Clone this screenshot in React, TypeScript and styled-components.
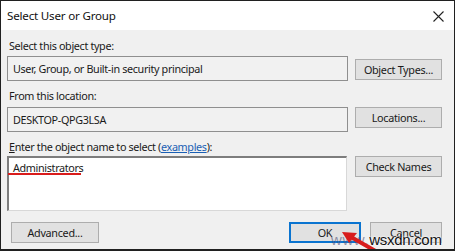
import React from 'react';
import styled, { createGlobalStyle } from 'styled-components';

const GlobalStyle = createGlobalStyle`
  html, body {
    margin: 0;
    padding: 0;
    background: #ffffff;
  }
  * {
    box-sizing: border-box;
  }
`;

const Window = styled.div`
  position: relative;
  width: 455px;
  height: 251px;
  border: 1px solid #202020;
  border-bottom-width: 2px;
  background: #f0f0f0;
  display: flex;
  flex-direction: column;
  overflow: hidden;
  font-family: 'Noto Sans', 'Open Sans', sans-serif;
  font-size: 10.8px;
  color: #1a1a1a;
`;

const TitleBar = styled.div`
  height: 29px;
  background: #ffffff;
  display: flex;
  align-items: center;
  justify-content: space-between;
  padding: 0 10px 0 6px;
  flex-shrink: 0;
`;

const Title = styled.span`
  font-size: 11.6px;
  letter-spacing: -0.2px;
  color: #111;
`;

const Body = styled.div`
  flex: 1;
  display: flex;
  flex-direction: column;
  padding: 9px 12px 0 6px;
`;

const Label = styled.div<{ $top?: number }>`
  margin-top: ${(p) => p.$top ?? 0}px;
  line-height: 14px;
  letter-spacing: -0.35px;
  padding-left: 2px;
`;

const Row = styled.div<{ $top?: number }>`
  display: flex;
  align-items: flex-start;
  justify-content: space-between;
  margin-top: ${(p) => p.$top ?? 0}px;
`;

const ReadBox = styled.div`
  width: 341px;
  height: 25px;
  border: 1px solid #8f8f8f;
  background: #f1f1f1;
  display: flex;
  align-items: center;
  padding-left: 5px;
  letter-spacing: -0.35px;
`;

const NameBox = styled.div`
  position: relative;
  width: 340px;
  height: 55px;
  background: #ffffff;
  border-top: 2px solid #7d7d7d;
  border-left: 2px solid #7d7d7d;
  border-right: 1px solid #d8d8d8;
  border-bottom: 1px solid #d8d8d8;
  padding: 2px 0 0 4px;
  letter-spacing: -0.35px;
`;

const Underline = styled.div`
  position: absolute;
  left: -1px;
  top: 15px;
  width: 73px;
  height: 2px;
  background: #d91c1c;
`;

const Button = styled.button<{ $w?: number; $focus?: boolean }>`
  width: ${(p) => p.$w ?? 87}px;
  height: 21px;
  font-family: inherit;
  font-size: 10.8px;
  letter-spacing: -0.3px;
  color: #1a1a1a;
  background: #e1e1e1;
  border: ${(p) => (p.$focus ? '2px solid #0a74d0' : '1px solid #adadad')};
  padding: 0;
  display: flex;
  align-items: center;
  justify-content: center;
`;

const Footer = styled.div`
  display: flex;
  align-items: center;
  margin-top: 11px;
  padding-left: 4px;
`;

const FooterRight = styled.div`
  margin-left: auto;
  display: flex;
  gap: 9px;
`;

const Link = styled.span`
  color: #1a5fb4;
  text-decoration: underline;
`;

const Access = styled.span`
  text-decoration: underline;
`;

const CloseIcon = styled.svg`
  width: 11px;
  height: 11px;
  margin-top: 2px;
`;

const Watermark = styled.div`
  position: absolute;
  left: 330px;
  top: 230px;
  display: flex;
  align-items: baseline;
  font-family: 'Liberation Sans', Arial, sans-serif;
  font-size: 15px;
  pointer-events: none;
`;

const WmFaint = styled.span`
  color: rgba(80, 80, 120, 0.6);
  letter-spacing: 0.6px;
`;

const WmDark = styled.span`
  color: #111;
  letter-spacing: -0.3px;
  text-shadow: 0 0 2px #fff, 0 0 2px #fff;
`;

const Arrow = styled.svg`
  position: absolute;
  left: 338px;
  top: 228px;
  width: 44px;
  height: 24px;
  pointer-events: none;
`;

export default function App() {
  return (
    <>
      <GlobalStyle />
      <Window>
        <TitleBar>
          <Title>Select User or Group</Title>
          <CloseIcon viewBox="0 0 11 11">
            <path d="M0.5 0.5 L10.5 10.5 M10.5 0.5 L0.5 10.5" stroke="#222" strokeWidth="1.1" />
          </CloseIcon>
        </TitleBar>
        <Body>
          <Label>Select this object type:</Label>
          <Row $top={3}>
            <ReadBox>User, Group, or Built-in security principal</ReadBox>
            <Button style={{ marginTop: 3 }}>Object Types...</Button>
          </Row>
          <Label $top={8}>From this location:</Label>
          <Row $top={4}>
            <ReadBox>DESKTOP-QPG3LSA</ReadBox>
            <Button>Locations...</Button>
          </Row>
          <Label $top={8}>
            <Access>E</Access>nter the object name to select (<Link>examples</Link>):
          </Label>
          <Row $top={2}>
            <NameBox>
              Administrators
              <Underline />
            </NameBox>
            <Button>Check Names</Button>
          </Row>
          <Footer>
            <Button $w={88}>Advanced...</Button>
            <FooterRight>
              <Button $w={72} $focus>OK</Button>
              <Button $w={72}>Cancel</Button>
            </FooterRight>
          </Footer>
        </Body>
        <Watermark>
          <WmFaint>www.</WmFaint>
          <WmDark>wsxdn.com</WmDark>
        </Watermark>
        <Arrow viewBox="0 0 44 24">
          <path d="M40 24 L12 8" stroke="#d81c1c" strokeWidth="4" strokeLinecap="round" />
          <path d="M3 3 L18 4 L10 14 Z" fill="#d81c1c" />
        </Arrow>
      </Window>
    </>
  );
}
